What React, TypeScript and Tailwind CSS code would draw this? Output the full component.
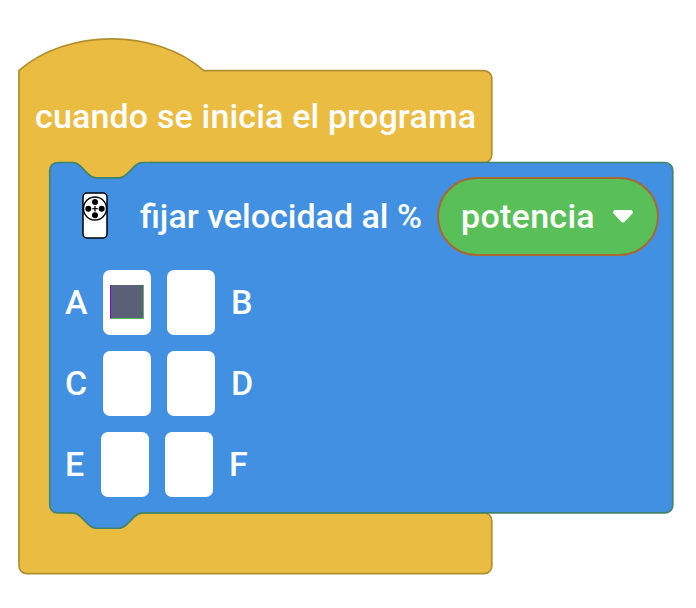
import React from "react";

const BLUE_PATH =
  "M0,4 a4,4 0 0,1 4,-4 H12 c2,0 3,1 4,2 l4,4 c1,1 2,2 4,2 h12 c2,0 3,-1 4,-2 l4,-4 c1,-1 2,-2 4,-2 H319.6 a4,4 0 0,1 4,4 V178 a4,4 0 0,1 -4,4 H48 c-2,0 -3,1 -4,2 l-4,4 c-1,1 -2,2 -4,2 h-12 c-2,0 -3,-1 -4,-2 l-4,-4 c-1,-1 -2,-2 -4,-2 H4 a4,4 0 0,1 -4,-4 z";

const HAT_PATH =
  "M0,0 c25,-22 71,-22 96,0 H241.6 a4,4 0 0,1 4,4 V43.8 a4,4 0 0,1 -4,4 H20 V229.8 H241.6 a4,4 0 0,1 4,4 V257.3 a4,4 0 0,1 -4,4 H4 a4,4 0 0,1 -4,-4 z";

function BlockShapes() {
  return (
    <svg className="absolute inset-0" width="696" height="608" viewBox="0 0 696 608">
      <g transform="translate(19 70.6) scale(1.925)" stroke="#b08f31" strokeWidth="0.9">
        <path d={HAT_PATH} fill="#ebbc42" />
      </g>
      <rect x="46" y="158" width="20" height="362" fill="#ebbc42" />
      <rect x="60" y="160" width="90" height="20" fill="#ebbc42" />
      <g transform="translate(49.8 162.5) scale(1.925)" stroke="#40846c" strokeWidth="0.9">
        <path d={BLUE_PATH} fill="#4290e1" />
      </g>
    </svg>
  );
}

function HubIcon() {
  return (
    <svg className="relative -top-px" width="26" height="47" viewBox="0 0 26 47" fill="none">
      <rect x="1" y="1" width="24" height="45" rx="4" fill="#fff" stroke="#000" strokeWidth="1.5" />
      <circle cx="13" cy="16.5" r="11.5" fill="#fff" stroke="#000" strokeWidth="1.4" />
      <g fill="#000">
        <circle cx="13" cy="10" r="3" />
        <circle cx="13" cy="23.3" r="3" />
        <circle cx="6.3" cy="16.7" r="3" />
        <circle cx="19.7" cy="16.7" r="3" />
      </g>
      <path d="M13 14v5.4M10.3 16.7h5.4" stroke="#000" strokeWidth="1.3" />
    </svg>
  );
}

function Port({ active = false }: { active?: boolean }) {
  return (
    <div className="h-[65px] w-12 rounded-[7px] bg-white pl-[7px] pt-[15px]">
      {active && (
        <div className="h-[34px] w-[34px] border-b border-l border-r border-b-[#55b96a] border-l-[#8a00d4] border-r-[#55b96a] bg-[#5a6078]" />
      )}
    </div>
  );
}

function PortRow({ left, right, active, labelClass }: { left: string; right: string; active?: boolean; labelClass: string }) {
  return (
    <div className="flex h-[65px] items-center">
      <span className={labelClass}>{left}</span>
      <div className="flex gap-4">
        <Port active={active} />
        <Port />
      </div>
      <span className="ml-4 pb-0.5">{right}</span>
    </div>
  );
}

export default function App() {
  return (
    <main className="relative h-[608px] w-[696px] overflow-hidden bg-white font-['Roboto',sans-serif] text-[34px] font-medium leading-10 text-white">
      <BlockShapes />
      <div className="relative flex flex-col">
        <header className="whitespace-nowrap pl-[35px] pt-24">
          <span className="tracking-[0.16px]">cuando se inicia el programa</span>
        </header>
        <section className="mt-[41px] flex h-[79px] items-center pl-[82px]">
          <HubIcon />
          <span className="ml-8 w-[297px] whitespace-nowrap pb-0.5">fijar velocidad al %</span>
          <div className="flex h-[79px] w-[222px] shrink-0 items-center rounded-full border-2 border-[#a9682f] bg-[#59c059] pl-[22px]">
            <span className="w-[152px] pb-0.5 tracking-[0.3px]">potencia</span>
            <svg width="20" height="13" viewBox="0 0 20 13">
              <path d="M2 0H18Q21 1 19 4L12 11.5Q10 13.5 8 11.5L1 4Q-1 1 2 0Z" fill="#fff" />
            </svg>
          </div>
        </section>
        <section className="mt-[14px] flex flex-col gap-4 pl-[65px]">
          <PortRow left="A" right="B" active labelClass="w-[38px] pb-0.5" />
          <PortRow left="C" right="D" labelClass="w-[38px] pb-0.5" />
          <PortRow left="E" right="F" labelClass="w-9 pb-0.5" />
        </section>
      </div>
    </main>
  );
}
